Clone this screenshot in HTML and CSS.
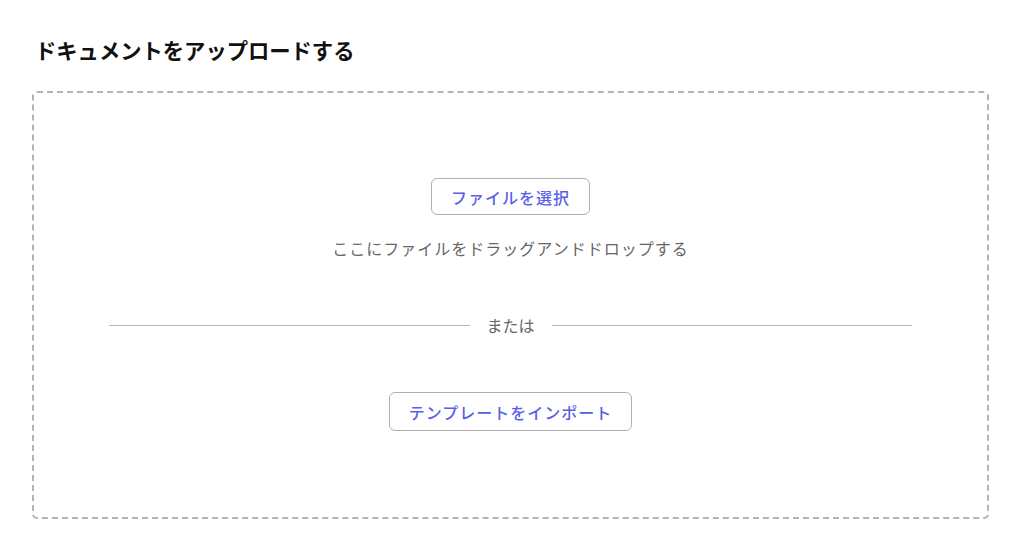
FILE: index.html
```html
<!DOCTYPE html>
<html lang="ja">
<head>
<meta charset="utf-8">
<link rel="stylesheet" href="styles.css">
</head>
<body>
<div class="page">
  <h1 class="title">ドキュメントをアップロードする</h1>
  <div class="dropzone">
    <button class="btn btn-file">ファイルを選択</button>
    <p class="hint">ここにファイルをドラッグアンドドロップする</p>
    <div class="divider"><span class="line"></span><span class="or">または</span><span class="line"></span></div>
    <button class="btn btn-template">テンプレートをインポート</button>
  </div>
</div>
</body>
</html>
```
FILE: styles.css
```css
* { box-sizing: border-box; }
html, body { margin: 0; padding: 0; background: #fff; }
body { font-family: "Noto Sans CJK JP", "Noto Sans", sans-serif; }
.page { padding: 36px 36px 0 32px; }
.title {
  margin: 0 0 0 3px;
  font-size: 21.3px;
  font-weight: 700;
  line-height: 28px;
  color: #111;
}
.dropzone {
  margin-top: 27px;
  width: 957px;
  height: 428px;
  border: 2px dashed #b4b4b4;
  border-radius: 5px;
  display: flex;
  flex-direction: column;
  align-items: center;
  padding-top: 85px;
}
.btn {
  font-family: inherit;
  font-size: 16px;
  font-weight: 500;
  letter-spacing: 1px;
  color: #5b5fe8;
  background: #fff;
  border: 1px solid #b0b0b0;
  border-radius: 6px;
  padding: 0 19px;
  cursor: pointer;
}
.btn-file { height: 37px; }
.btn-template { height: 39px; }
.hint {
  margin: 21px 0 0;
  font-size: 16px;
  letter-spacing: 1px;
  line-height: 24px;
  color: #666;
}
.divider {
  margin-top: 53px;
  width: 803px;
  display: flex;
  align-items: center;
  gap: 17px;
}
.line { flex: 1; height: 1px; background: #b5b5b5; }
.or { font-size: 16px; color: #666; line-height: 24px; }
.btn-template { margin-top: 55px; }
```
